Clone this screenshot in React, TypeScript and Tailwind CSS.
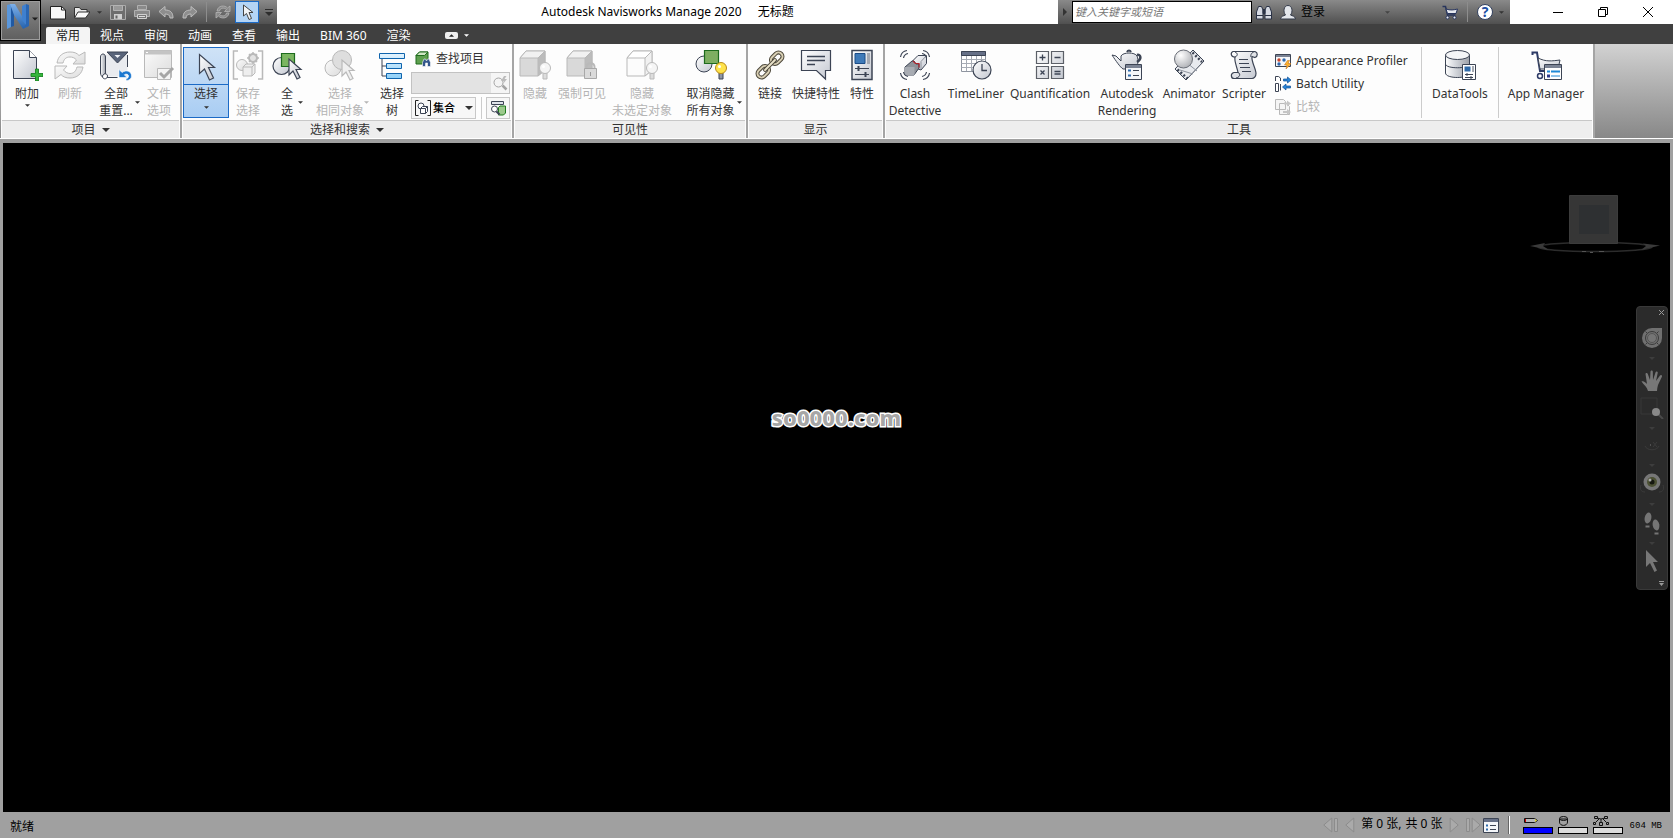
import React from "react";
import clsx from "clsx";

// ============================================================================
// Small shared pieces
// ============================================================================

const INK = "#3c4454";
const PALE = "#b9b9b9";

function Caret({ className = "" }: { className?: string }) {
  return (
    <svg viewBox="0 0 8 4" className={clsx("shrink-0", className)}>
      <path d="M0 0h8L4 4z" fill="currentColor" />
    </svg>
  );
}

function Big({ children }: { children: React.ReactNode }) {
  return (
    <svg viewBox="0 0 32 32" className="h-8 w-8 shrink-0" fill="none">
      {children}
    </svg>
  );
}

function Small({ children }: { children: React.ReactNode }) {
  return (
    <svg viewBox="0 0 16 16" className="h-4 w-4 shrink-0" fill="none">
      {children}
    </svg>
  );
}

// Gradients used by the icons below
function IconDefs() {
  return (
    <svg width="0" height="0" className="absolute" aria-hidden="true">
      <defs>
        <linearGradient id="metal" x1="0" y1="0" x2="1" y2="1">
          <stop offset="0" stopColor="#ffffff" />
          <stop offset="1" stopColor="#c3c7d0" />
        </linearGradient>
        <linearGradient id="faded" x1="0" y1="0" x2="1" y2="1">
          <stop offset="0" stopColor="#fbfbfb" />
          <stop offset="1" stopColor="#dcdcdc" />
        </linearGradient>
        <linearGradient id="bar" x1="0" y1="0" x2="0" y2="1">
          <stop offset="0" stopColor="#e4f4ff" />
          <stop offset="1" stopColor="#8fd0f8" />
        </linearGradient>
        <linearGradient id="drum" x1="0" y1="0" x2="1" y2="0">
          <stop offset="0" stopColor="#ffffff" />
          <stop offset="0.4" stopColor="#d5d8dd" />
          <stop offset="1" stopColor="#9ca0a8" />
        </linearGradient>
        <linearGradient id="logo" x1="0" y1="0" x2="0" y2="1">
          <stop offset="0" stopColor="#7db0ea" />
          <stop offset="1" stopColor="#2462ad" />
        </linearGradient>
        <radialGradient id="ball" cx="0.35" cy="0.3" r="0.8">
          <stop offset="0" stopColor="#ffffff" />
          <stop offset="1" stopColor="#a9abb0" />
        </radialGradient>
      </defs>
    </svg>
  );
}

// ============================================================================
// Ribbon icons, 32px
// ============================================================================

const Pointer = ({ x, y, faded }: { x: number; y: number; faded?: boolean }) => (
  <path
    transform={`translate(${x} ${y})`}
    d="M0 0v16l4-4 4 8 3-1.500-4-8h5z"
    fill={faded ? "#f0f0f0" : "url(#metal)"}
    stroke={faded ? PALE : INK}
    strokeWidth="1.200"
  />
);

const Cube = ({ light }: { light?: boolean }) => (
  <g stroke={PALE} strokeLinejoin="round">
    <path d="M1 9v18h18l7-6V2H7z" fill={light ? "#fcfcfc" : "#d9d9d9"} />
    <path d="M1 9l6-7h19l-7 7z" fill={light ? "#fff" : "#f1f1f1"} />
    <path d="M19 9l7-7v19l-7 6z" fill={light ? "#f1f1f1" : "#bcbcbc"} />
  </g>
);

const Bulb = ({ lit }: { lit?: boolean }) => (
  <g stroke={lit ? INK : PALE}>
    <path d="M24 24h4v6h-4z" fill={lit ? "#8f96a3" : "#ddd"} />
    <circle cx="26" cy="19" r="5.500" fill={lit ? "#ffe34a" : "#f5f5f5"} stroke={lit ? "#b9891a" : PALE} />
    <circle cx="24.500" cy="17.500" r="1.500" fill="#fff" stroke="none" />
  </g>
);

const AppendIcon = () => (
  <Big>
    <path d="M2.500 1.500h16l7 7v21h-23z" fill="url(#metal)" stroke={INK} />
    <path d="M18.500 1.500v7h7" fill="#fff" stroke={INK} />
    <path d="M24.500 20h3v4.500H32v3h-4.500V32h-3v-4.500H20v-3h4.500z" fill="#35b53c" stroke="#0c7a17" strokeWidth=".8" />
  </Big>
);

const RefreshIcon = () => (
  <Big>
    <g fill="url(#faded)" stroke={PALE}>
      <path d="M3 14C4 7 9 3 16 3c4 0 7 1 9 3.500L31 3v12H19l3.500-4C20.500 8.500 18 8 16 8c-4 0-6 2-7 6z" />
      <path d="M29 18c-1 7-6 11-13 11-4 0-7-1-9-3.500L1 30V17h12l-3.500 4c2 2.500 4.500 3.500 6.500 3.500 4 0 6-2.500 7-6.500z" />
    </g>
  </Big>
);

const ResetIcon = () => (
  <Big>
    <path d="M5.500 5.500h22v22h-22z" fill="#e9ebef" />
    <path d="M27.500 6v12M5.500 28.500h12" stroke={INK} />
    <path d="M0.500 8c0-4 5-4 5 0v17c-2 0-3 1-3 3-1-1-2-2-2-4z" fill="url(#drum)" stroke={INK} />
    <path d="M2.500 28c0-4 5-4 5-1s-4 4-5 1z" fill="#fff" stroke={INK} />
    <path d="M7 3h21L17.500 14z" fill="#59647a" stroke={INK} />
    <path d="M14.500 6h6l-3 3z" fill="#eef1f6" />
    <path
      d="M19 20.500v8h8l-2.700-2.700c2-1.500 4.200-.3 4.200 1.200 0 1.500-1 2.500-2.500 3v1.500c3.500 0 5.500-2 5.500-4.500 0-5-5.500-6.500-9.500-3.500z"
      fill="#1c78d0"
      stroke="#fff"
      strokeWidth=".6"
    />
  </Big>
);

const FileOptionsIcon = () => (
  <Big>
    <path d="M1.500 1.500h27v27h-27z" fill="url(#faded)" stroke={PALE} />
    <path d="M1.500 1.500h27v4h-27z" fill="#c4c4c4" />
    <path d="M3 3.500h2" stroke="#fff" />
    <path d="M14.500 19.500h13v11h-13z" fill="#f4f4f4" stroke={PALE} />
    <path d="M17 24l4 4 9-9" stroke="#a6a6a6" strokeWidth="3" />
  </Big>
);

const SelectIcon = () => (
  <Big>
    <path d="M9.500 4.500v19l5-4.500 5 11 4-2-5-10.500h6z" fill="url(#metal)" stroke={INK} strokeWidth="1.200" />
  </Big>
);

const SaveSelectionIcon = () => (
  <Big>
    <g stroke={PALE}>
      <path d="M6 2H1.500v28H6M26 2h4.500v28H26" strokeWidth="1.500" />
      <circle cx="10" cy="16" r="5.500" fill="url(#faded)" />
      <path d="M11 18l3-3h9v9l-3 3h-9z" fill="#eee" />
      <path d="M11 18h9l3-3m-3 3v9" />
      <circle cx="21" cy="9" r="4" fill="#e3e3e3" strokeWidth="2" />
      <path d="M21 3v3m0 6v3m-6-6h3m6 0h3M17 5l2 2m4 4l2 2m0-8l-2 2m-4 4l-2 2" strokeWidth="1.500" />
    </g>
  </Big>
);

const SelectAllIcon = () => (
  <Big>
    <circle cx="10.500" cy="17" r="8.500" fill="url(#metal)" stroke={INK} strokeWidth="1.200" />
    <path d="M10.500 4.500h13v13h-13z" fill="#7bb661" stroke="#1d6b1d" strokeWidth="1.200" />
    <Pointer x={18} y={10} />
  </Big>
);

const SelectSameIcon = () => (
  <Big>
    <circle cx="9" cy="19" r="8" fill="url(#faded)" stroke={PALE} />
    <circle cx="18" cy="11" r="9.500" fill="#dedede" stroke={PALE} />
    <Pointer x={18} y={11} faded />
  </Big>
);

const TreeIcon = () => (
  <Big>
    <path d="M6 9v18h4M6 17h4" stroke={INK} />
    <g fill="url(#bar)" stroke="#0f64ad">
      <path d="M3.500 4.500h25v5h-25zM10.500 14.500h15v5h-15zM10.500 24.500h15v5h-15z" />
    </g>
  </Big>
);

const HideIcon = () => (
  <Big>
    <Cube />
    <Bulb />
  </Big>
);

const RequireIcon = () => (
  <Big>
    <Cube />
    <path d="M20.500 20v-2c0-5 8-5 8 0v2" stroke={PALE} strokeWidth="2" />
    <path d="M18.500 19.500h12v10h-12z" fill="#dadada" stroke="#a8a8a8" />
    <path d="M24.500 23v4" stroke="#999" />
  </Big>
);

const HideOthersIcon = () => (
  <Big>
    <Cube light />
    <Bulb />
  </Big>
);

const UnhideIcon = () => (
  <Big>
    <circle cx="9" cy="15" r="8" fill="url(#metal)" stroke={INK} />
    <path d="M9.500 1.500h14v13h-14z" fill="#7eae62" stroke="#1d6b1d" strokeWidth="1.200" />
    <Bulb lit />
  </Big>
);

const LinkIcon = () => (
  <Big>
    <g transform="rotate(-45 16 16)" strokeLinejoin="round">
      <rect x="0" y="12" width="13" height="8" rx="4" stroke="#4b4639" strokeWidth="4" />
      <rect x="0" y="12" width="13" height="8" rx="4" stroke="#d8cfb4" strokeWidth="2" />
      <rect x="19" y="12" width="13" height="8" rx="4" stroke="#4b4639" strokeWidth="4" />
      <rect x="19" y="12" width="13" height="8" rx="4" stroke="#d8cfb4" strokeWidth="2" />
      <path d="M9 16h14" stroke="#4b4639" strokeWidth="4" strokeLinecap="round" />
      <path d="M9 16h14" stroke="#e8e0c8" strokeWidth="2" strokeLinecap="round" />
    </g>
  </Big>
);

const QuickPropsIcon = () => (
  <Big>
    <path d="M1.500 1.500h29v20h-5V30l-9-8.500h-15z" fill="url(#metal)" stroke={INK} strokeWidth="1.200" />
    <path d="M7 7.500h18M7 11.500h18M7 15.500h8" stroke={INK} strokeWidth="1.500" />
  </Big>
);

const PropsIcon = () => (
  <Big>
    <path d="M6 1.500h20v29H6z" fill="url(#metal)" stroke={INK} strokeWidth="1.500" />
    <path d="M9 4.500h10v10H9z" fill="#3f7ab8" stroke="#1b4c87" />
    <path d="M21 4h3v11h-3z" fill="#a4a9b2" />
    <path d="M9 19.500h14M9 25.500h14" stroke={INK} />
    <path d="M12.500 17v5M19.500 23v5" stroke={INK} strokeWidth="2" />
  </Big>
);

const ClashIcon = () => (
  <Big>
    <path d="M13.500 12l5.500-5.500h8.500v8L22 21l-8.500-3z" fill="url(#metal)" stroke={INK} />
    <path d="M22 12.500l5.500-6M22 12.500V20" stroke="#8d929c" />
    <path d="M6 18l7-6h2l2 3h3v4l-5 7H6z" fill="#8e9299" stroke={INK} />
    <path d="M6 18h9.500V26H6z" fill="#a8acb3" />
    <path d="M14 12l2.500 2.500h3.500v4" stroke="#b0232c" strokeWidth="1.200" />
    <path
      d="M1.500 8C2 4.500 4.500 2 8 1.500M4.500 9C5 6.500 6.500 5 9 4.500M30.500 8C30 4.500 27.500 2 24 1.500M27.500 9C27 6.500 26 5 23 4.500M1.500 24c.5 3.500 3 6 6.500 6.500M4.500 23c.5 2.500 2 4 4.500 4.500M30.500 24c-.5 3.500-3 6-6.500 6.500M27.500 23c-.5 2.500-2 4-4.500 4.500"
      stroke={INK}
      strokeWidth="1.200"
    />
  </Big>
);

const TimeLinerIcon = () => (
  <Big>
    <path d="M1.500 2.500h24v20h-24z" fill="#fff" stroke="#8f95a0" />
    <path d="M1.500 2.500h24v4h-24z" fill="#667087" stroke={INK} />
    <path d="M1.500 10.500h24m-24 4h24m-24 4h24M6.500 7v15M11.500 7v15M16.500 7v15M21.500 7v15" stroke="#a7acb5" />
    <circle cx="22" cy="21" r="9" fill="url(#metal)" stroke={INK} strokeWidth="1.200" />
    <path d="M22 15v6.500h5" stroke={INK} strokeWidth="1.300" />
  </Big>
);

const QuantIcon = () => (
  <Big>
    <g fill="url(#metal)" stroke="#5c6068" strokeWidth="1.200">
      <path d="M2.500 2.500h12v12h-12zM17.500 2.500h12v12h-12zM2.500 17.500h12v12h-12zM17.500 17.500h12v12h-12z" />
    </g>
    <path
      d="M5.500 8.500h6m-3-3v6M20.500 8.500h6M6.500 21.500l4 4m0-4l-4 4M20.500 22.500h6m-6 2.500h6"
      stroke={INK}
      strokeWidth="1.300"
    />
  </Big>
);

const RenderingIcon = () => (
  <Big>
    <path d="M10 7c2-4 14-4 16 0 2 5 1 10-3 13H12C9 18 5 12 1 6l4 1 5 5z" fill="url(#metal)" stroke={INK} />
    <path d="M16 3c1-2 3-2 4 0" stroke={INK} strokeWidth="2" />
    <path d="M26 6c4-1 5 4 0 7" stroke={INK} strokeWidth="2.500" />
    <path d="M14.500 15.500h16v15h-16z" fill="#f4f6f9" stroke={INK} />
    <path d="M15 16h15v3H15z" fill="#7b8394" />
    <path d="M17 21.500h3m-3 5h3" stroke="#2e6aac" strokeWidth="2" />
    <path d="M22 21.500h6m-6 5h6" stroke={INK} />
  </Big>
);

const AnimatorIcon = () => (
  <Big>
    <path d="M2 20L20 1l11 11-18 19z" fill="#e8eaee" stroke={INK} />
    <path d="M4.500 20.500l10 9M19.500 3.500l9.500 9.500" stroke={INK} strokeWidth="2.500" strokeDasharray="2 2" />
    <path d="M7 21l13 4M14 14l10 8" stroke="#8f95a0" />
    <circle cx="10.500" cy="10" r="9" fill="url(#ball)" stroke="#6a6e77" />
  </Big>
);

const ScripterIcon = () => (
  <Big>
    <path d="M5 2.500h22c3 1 3 5 0 6l-3-1c-1 5 4 12 4 17 0 3-2 5-4 5H6c-3 0-4-5 0-6h4C9 18 6 12 7 8 3 8 2 4 5 2.500z" fill="url(#metal)" stroke={INK} strokeWidth="1.200" />
    <path d="M7 8c3-1 3-4 0-5M23 8c-1-2 1-5 4-5.500M10 23.500c3 1 2 5-2 5.500" stroke={INK} />
    <path d="M11 10.500h9M11 14.500h10M12 18.500h10M14 22.500h9" stroke={INK} />
  </Big>
);

const DataToolsIcon = () => (
  <Big>
    <path d="M1.500 6v18c0 6 24 6 24 0V6z" fill="url(#drum)" stroke={INK} />
    <ellipse cx="13.500" cy="6" rx="12" ry="4.500" fill="#f4f5f7" stroke={INK} />
    <path d="M1.500 15c0 5 24 5 24 0" stroke={INK} />
    <path d="M18.500 15.500h13v15h-13z" fill="#fff" stroke={INK} />
    <path d="M20.500 17.500h6v5h-6z" fill="#2f6aa9" />
    <path d="M28 17v6h2v-6z" fill="#a4a9b2" />
    <path d="M21 25.500h8m-8 3h8" stroke={INK} />
    <path d="M23 24v3m4 0v3" stroke={INK} />
  </Big>
);

const AppManagerIcon = () => (
  <Big>
    <path d="M2.500 6V3.500H7L10 22h5" stroke="#2d3a66" strokeWidth="2" />
    <path d="M8 9c8 4 14 3 22 2l-2 9H10z" fill="url(#metal)" stroke={INK} />
    <circle cx="10" cy="27" r="2.500" fill="#fff" stroke="#2d3a66" strokeWidth="1.500" />
    <path d="M14.500 15.500h17v15h-17z" fill="#fff" stroke={INK} />
    <path d="M15 16h16v3H15z" fill="#7b8394" />
    <path d="M17 22.500h3m1 0h9" stroke="#1f8ad8" strokeWidth="2" />
    <path d="M17 27h3" stroke="#2d3a8c" strokeWidth="3" />
    <path d="M21 27h9" stroke="#1f8ad8" />
  </Big>
);

// ============================================================================
// 16px icons
// ============================================================================

const NewIcon = () => (
  <Small>
    <path d="M.5 2.500h11l4 3.500v9H.5z" fill="#f7f7f7" stroke="#222" />
    <path d="M11.500 2.500V6h4" stroke="#222" />
  </Small>
);

const OpenIcon = () => (
  <Small>
    <path d="M.5 14V3.500h5l1.500 2h6V8" fill="#e9e9e9" stroke="#333" />
    <path d="M.5 14L4 8h12l-4.500 6z" fill="#fafafa" stroke="#333" />
  </Small>
);

const SaveIcon = () => (
  <Small>
    <path d="M.5 1.500h15v14H.5z" fill="#6e6e6e" stroke="#aaa" />
    <path d="M3.500 1.500h9v5h-9z" fill="#999" stroke="#b4b4b4" />
    <path d="M4 10h8v5H4z" fill="#cfcfcf" />
    <path d="M5.500 11.500h2v3h-2z" fill="#666" />
  </Small>
);

const PrintIcon = () => (
  <Small>
    <path d="M3.500 1.500h9v4h-9zM.5 6.500h15v6H.5z" fill="#8a8a8a" stroke="#b0b0b0" />
    <path d="M3.500 10.500h9v4h-9z" fill="#777" stroke="#d0d0d0" />
    <path d="M5 12.500h6" stroke="#ddd" />
  </Small>
);

const UndoIcon = ({ flip }: { flip?: boolean }) => (
  <Small>
    <path
      transform={flip ? "translate(16 0) scale(-1 1)" : undefined}
      d="M1 7.500l6-5V6c5 0 8 2 8 8h-3c0-3-2-4-5-4v3z"
      fill="#8e8e8e"
      stroke="#bdbdbd"
    />
  </Small>
);

const SyncIcon = () => (
  <Small>
    <path d="M2 7c1-6 8-6 10.500-3L15 2v5.500H9.500l2-2C9.500 3.500 5 3.500 4.500 7zM14 9c-1 6-8 6-10.500 3L1 14V8.500h5.500l-2 2c2 2 6.500 2 7-1.500z" fill="#8a8a8a" stroke="#b5b5b5" strokeWidth=".8" />
  </Small>
);

const CursorIcon = () => (
  <Small>
    <path d="M4.500 1v11l3-2.500 2.500 6 2.500-1-2.500-6h4z" fill="#f1f3f6" stroke="#444" />
  </Small>
);

const BinocularsIcon = () => (
  <Small>
    <g fill="#d5d9e2" stroke="#2a3246">
      <path d="M.5 15V8l2-5.500h3L7 6v9zM15.500 15V8l-2-5.500h-3L9 6v9z" />
      <path d="M7 5.500h2v4H7z" fill="#2a3246" />
    </g>
    <path d="M.5 11.500H7M9 11.500h6.500" stroke="#2a3246" />
  </Small>
);

const UserIcon = () => (
  <Small>
    <path d="M.5 15c.5-3 3-3 5-4C3 8 3.500 1.500 8 1.500S13 8 10.500 11c2 1 4.500 1 5 4z" fill="#e3e6eb" stroke="#333a49" />
  </Small>
);

const CartIcon = () => (
  <Small>
    <path d="M.5 2.500h3l2 8.500h8" stroke="#27345c" strokeWidth="1.500" />
    <path d="M4 5c4 1.500 8 1 11.500 0L14 9.500H5.500z" fill="#e6e9f0" stroke="#27345c" />
    <circle cx="5.500" cy="13.500" r="1.500" fill="#e6e9f0" stroke="#27345c" />
    <circle cx="12.500" cy="13.500" r="1.500" fill="#e6e9f0" stroke="#27345c" />
  </Small>
);

const FindItemsIcon = () => (
  <Small>
    <path d="M1 4.500L4.500 1H13v8l-3.500 4H1z" fill="#5d9f4e" stroke="#1e6b1c" />
    <path d="M1 4.500L4.500 1H13L9.500 4.500z" fill="#cfe6c4" stroke="#1e6b1c" />
    <path d="M7.500 15.500v-4L9 8h1.500l1 2 1-2H14l1.500 3.500v4h-3V12h-2v3.500z" fill="#33568c" stroke="#fff" strokeWidth=".6" />
  </Small>
);

const QuickFindIcon = () => (
  <Small>
    <path d="M10.500 10.500l4 4" stroke="#a5a5a5" strokeWidth="2.500" />
    <circle cx="6.500" cy="7.500" r="4.500" fill="#f4f4f4" stroke="#a5a5a5" />
    <path d="M12 1l-3 5h3l-1 3 4-5h-2.500l2-3z" fill="#bbb" />
  </Small>
);

const SetsIcon = () => (
  <Small>
    <path d="M3.500.5H.5v15h3M12.500.5h3v15h-3" stroke="#222" />
    <circle cx="6" cy="6" r="3" fill="#fff" stroke="#3a4252" />
    <path d="M5.500 8.500l2-2h5v5l-2 2h-5z" fill="#fff" stroke="#3a4252" />
    <path d="M5.500 8.500h5v5m0-5l2-2" stroke="#3a4252" />
  </Small>
);

const FindWindowIcon = () => (
  <Small>
    <path d="M1.500 1.500h12v3h-12z" fill="#dfe3ea" stroke={INK} />
    <path d="M8.500 7.500L10 6h5.500v7l-2 2h-5z" fill="#9cc98c" stroke="#1e7a1c" />
    <circle cx="4.500" cy="9" r="3" fill="#fff" stroke={INK} />
    <path d="M6.500 11.500l3 3" stroke={INK} strokeWidth="2" />
  </Small>
);

const AppearanceIcon = () => (
  <Small>
    <path d="M.5 1.500h15v12H.5z" fill="#f6f7f9" stroke={INK} />
    <path d="M1 2h14v2H1z" fill="#7b8394" />
    <circle cx="4" cy="7" r="1.700" fill="#c8442c" />
    <circle cx="9" cy="7" r="1.700" fill="#2e68ae" />
    <circle cx="4" cy="11" r="1.700" fill="#2e68ae" />
    <path d="M12.500 7.500L9.500 12H12l-1 4 5-5.500h-3l1.500-3z" fill="#ffb42e" stroke="#c9761a" strokeWidth=".6" />
  </Small>
);

const BatchIcon = () => (
  <Small>
    <path d="M.5 5V.5h3L5.500 2v3M.5 15.500v-8h3v8zM5.500 8v6.500" fill="#fff" stroke={INK} />
    <path d="M16 4l-3.500-3v2H8.500v2h4v2zM7.500 11L11 8v2h4.500v2H11v2z" fill="#2784d8" stroke="#0f4f96" strokeWidth=".7" />
  </Small>
);

const CompareIcon = () => (
  <Small>
    <path d="M.5.5h8l2 2v8H.5zM4.500 4.500h7l3 3v8h-10z" fill="#f5f5f5" stroke={PALE} />
    <path d="M16 4.500l-4-3v2H9v2h3v2zM8 12h4v-2l4 3-4 3v-2H8z" fill="#c5c5c5" />
  </Small>
);

// ============================================================================
// Ribbon
// ============================================================================

interface ToolProps {
  icon: React.ElementType;
  lines: string[];
  width: string;
  disabled?: boolean;
  menu?: boolean;
}

function Tool({ icon: Icon, lines, width, disabled, menu }: ToolProps) {
  return (
    <button
      type="button"
      disabled={disabled}
      className={clsx(
        "relative flex shrink-0 flex-col items-center pt-1 leading-[17px] whitespace-nowrap",
        disabled ? "text-[#b4b4b4]" : "text-[#333]",
        width,
      )}
    >
      <Icon />
      <span className="mt-0.5 flex flex-col items-center pt-0.5">
        {lines.map((line) => (
          <span key={line}>{line}</span>
        ))}
      </span>
      {menu && lines.length === 1 && <Caret className="mt-0.5 h-[3px] w-[5px]" />}
      {menu && lines.length > 1 && (
        <Caret className="absolute right-1 bottom-4 h-[3px] w-[5px]" />
      )}
    </button>
  );
}

interface PanelProps {
  title: string;
  menu?: boolean;
  children: React.ReactNode;
}

function Panel({ title, menu, children }: PanelProps) {
  return (
    <section className="flex shrink-0 flex-col border-r-2 border-[#a5a5a5] bg-[#fdfdfd] pl-px">
      <div className="flex h-[76px] items-stretch pt-px">{children}</div>
      <h2 className="mr-px flex h-[18px] items-center justify-center gap-1.5 border-t border-[#c8c8c8] bg-[#eee] text-[#333]">
        {title}
        {menu && <Caret className="h-1 w-2" />}
      </h2>
    </section>
  );
}

function SelectionTools() {
  return (
    <div className="flex w-[101px] flex-col gap-[3px] pt-1 pr-0.5">
      <button type="button" className="flex h-5 items-center gap-[5px] pl-1 text-[#333]">
        <FindItemsIcon />
        查找项目
      </button>
      <div className="flex h-[22px] items-center border border-[#c2c2c2] bg-[#e3e3e3]">
        <input aria-label="快速查找" disabled className="h-full w-0 flex-1 bg-transparent px-1 outline-none" />
        <button type="button" aria-label="查找" className="flex h-full w-[18px] items-center justify-center bg-[#f5f5f5]">
          <QuickFindIcon />
        </button>
      </div>
      <div className="flex h-[22px] items-stretch justify-between">
        <div className="relative flex w-[65px] items-center border border-[#c8c8c8] bg-[#f7f7f7] pl-[3px]">
          <SetsIcon />
          <select aria-label="集合" className="h-full w-0 flex-1 appearance-none bg-transparent pl-0.5 text-[11px] font-medium text-black outline-none">
            <option>集合</option>
          </select>
          <Caret className="pointer-events-none absolute right-0.5 h-1 w-2 text-[#333]" />
        </div>
        <span className="border-l border-[#ccc]" />
        <button type="button" aria-label="选择检验器" className="flex w-6 items-center justify-center border border-[#c8c8c8] bg-[#f7f7f7]">
          <FindWindowIcon />
        </button>
      </div>
    </div>
  );
}

function Ribbon() {
  return (
    <div className="flex overflow-hidden border-b border-white bg-linear-to-b from-[#d2d2d2] to-[#888] pl-px">
      <Panel title="项目" menu>
        <Tool icon={AppendIcon} lines={["附加"]} width="w-[50px]" menu />
        <Tool icon={RefreshIcon} lines={["刷新"]} width="w-9" disabled />
        <Tool icon={ResetIcon} lines={["全部", "重置..."]} width="w-14" menu />
        <Tool icon={FileOptionsIcon} lines={["文件", "选项"]} width="mr-1.5 w-[30px]" disabled />
      </Panel>

      <Panel title="选择和搜索" menu>
        <button
          type="button"
          className="my-0.5 flex w-[46px] shrink-0 flex-col items-center border border-[#1b6ac6] bg-linear-to-b from-[#cfe2f6] to-[#a9cdf3] pt-0.5 leading-[17px] text-[#333]"
        >
          <SelectIcon />
          <span className="mt-0.5 w-full border-t border-[#1b6ac6]">选择</span>
          <Caret className="mt-1 h-[3px] w-[5px]" />
        </button>
        <Tool icon={SaveSelectionIcon} lines={["保存", "选择"]} width="w-[38px]" disabled />
        <Tool icon={SelectAllIcon} lines={["全", "选"]} width="w-10" menu />
        <Tool icon={SelectSameIcon} lines={["选择", "相同对象"]} width="w-[66px]" disabled menu />
        <Tool icon={TreeIcon} lines={["选择", "树"]} width="w-[38px]" />
        <SelectionTools />
      </Panel>

      <Panel title="可见性">
        <Tool icon={HideIcon} lines={["隐藏"]} width="w-10" disabled />
        <Tool icon={RequireIcon} lines={["强制可见"]} width="w-[54px]" disabled />
        <Tool icon={HideOthersIcon} lines={["隐藏", "未选定对象"]} width="w-[66px]" disabled />
        <Tool icon={UnhideIcon} lines={["取消隐藏", "所有对象"]} width="w-[71px]" menu />
      </Panel>

      <Panel title="显示">
        <Tool icon={LinkIcon} lines={["链接"]} width="w-[42px]" />
        <Tool icon={QuickPropsIcon} lines={["快捷特性"]} width="w-[50px]" />
        <Tool icon={PropsIcon} lines={["特性"]} width="w-[42px]" />
      </Panel>

      <Panel title="工具">
        <Tool icon={ClashIcon} lines={["Clash", "Detective"]} width="w-[58px]" />
        <Tool icon={TimeLinerIcon} lines={["TimeLiner"]} width="w-16" />
        <Tool icon={QuantIcon} lines={["Quantification"]} width="w-[84px]" />
        <Tool icon={RenderingIcon} lines={["Autodesk", "Rendering"]} width="w-[70px]" />
        <Tool icon={AnimatorIcon} lines={["Animator"]} width="w-[54px]" />
        <Tool icon={ScripterIcon} lines={["Scripter"]} width="w-14" />
        <div className="my-0.5 flex w-[150px] flex-col border-r border-[#ccc] pt-0.5 pl-[3px] text-[#333]">
          <button type="button" className="flex h-6 items-center gap-[5px] whitespace-nowrap">
            <AppearanceIcon />
            Appearance Profiler
          </button>
          <button type="button" className="flex h-6 items-center gap-[5px] whitespace-nowrap">
            <BatchIcon />
            Batch Utility
          </button>
          <button type="button" disabled className="flex h-6 items-center gap-[5px] text-[#b4b4b4]">
            <CompareIcon />
            比较
          </button>
        </div>
        <Tool icon={DataToolsIcon} lines={["DataTools"]} width="w-[76px]" />
        <span className="my-0.5 border-l border-[#ccc]" />
        <Tool icon={AppManagerIcon} lines={["App Manager"]} width="w-[94px]" />
      </Panel>
    </div>
  );
}

// ============================================================================
// Title bar and tabs
// ============================================================================

const TABS = ["常用", "视点", "审阅", "动画", "查看", "输出", "BIM 360", "渲染"];

const QUICK_ACTIONS = [
  { id: "save", label: "保存", icon: SaveIcon },
  { id: "print", label: "打印", icon: PrintIcon },
  { id: "undo", label: "撤消", icon: UndoIcon },
];

function QuickAccess() {
  return (
    <div className="flex w-[236px] items-center gap-2 bg-linear-to-b from-[#8a8a8a] to-[#505050] pl-[9px]">
      <button type="button" aria-label="新建"><NewIcon /></button>
      <button type="button" aria-label="打开" className="flex items-center gap-[7px] text-[#333]">
        <OpenIcon />
        <Caret className="h-[3px] w-[5px]" />
      </button>
      {QUICK_ACTIONS.map(({ id, label, icon: Icon }) => (
        <button key={id} type="button" aria-label={label}><Icon /></button>
      ))}
      <button type="button" aria-label="恢复"><UndoIcon flip /></button>
      <span className="h-5 border-l border-[#8d8d8d]" />
      <button type="button" aria-label="刷新"><SyncIcon /></button>
      <div className="-ml-1 flex items-center gap-1.5">
        <button type="button" aria-label="选择" className="flex h-[22px] w-6 items-center justify-center border border-[#1b6ac6] bg-[#b4d4f5]">
          <CursorIcon />
        </button>
        <button type="button" aria-label="自定义" className="text-[#2d2d2d]">
          <svg viewBox="0 0 8 7" className="h-[7px] w-2">
            <path d="M0 0h8v1H0zM0 3h8L4 7z" fill="currentColor" />
          </svg>
        </button>
      </div>
    </div>
  );
}

function InfoCenter() {
  return (
    <div className="flex w-[452px] items-center bg-linear-to-b from-[#8a8a8a] to-[#505050] pr-1.5 text-black">
      <button type="button" aria-label="展开" className="flex w-3.5 justify-center text-[#333]">
        <svg viewBox="0 0 4 8" className="h-2 w-1">
          <path d="M0 0l4 4-4 4z" fill="currentColor" />
        </svg>
      </button>
      <input
        aria-label="搜索"
        placeholder="键入关键字或短语"
        className="h-[22px] w-[180px] border border-black bg-white px-0.5 pb-0.5 text-[11px] outline-none placeholder:text-[#777] placeholder:italic"
      />
      <button type="button" aria-label="搜索" className="ml-1"><BinocularsIcon /></button>
      <button type="button" className="ml-2 flex flex-1 items-center gap-[5px]">
        <UserIcon />
        登录
        <Caret className="ml-[55px] h-[3px] w-[5px] text-[#444]" />
      </button>
      <button type="button" aria-label="应用商店"><CartIcon /></button>
      <span className="mx-[9px] h-5 border-l border-[#8d8d8d]" />
      <button type="button" aria-label="帮助" className="flex items-center gap-1.5 text-[#333]">
        <span className="flex h-4 w-4 items-center justify-center rounded-full border border-[#33415f] bg-white text-sm font-bold text-[#1d4fa3]">
          ?
        </span>
        <Caret className="h-[3px] w-[5px]" />
      </button>
    </div>
  );
}

function WindowControls() {
  return (
    <div className="flex w-[163px] justify-end bg-white pr-[3px] text-black">
      <button type="button" aria-label="最小化" className="flex w-[45px] items-center justify-center">
        <svg viewBox="0 0 10 10" className="h-2.5 w-2.5"><path d="M0 5.500h10" stroke="currentColor" /></svg>
      </button>
      <button type="button" aria-label="还原" className="flex w-[45px] items-center justify-center">
        <svg viewBox="0 0 10 10" className="h-2.5 w-2.5" fill="none">
          <path d="M.5 2.500h7v7h-7zM2.500 2.500v-2h7v7h-2" stroke="currentColor" />
        </svg>
      </button>
      <button type="button" aria-label="关闭" className="flex w-[45px] items-center justify-center">
        <svg viewBox="0 0 10 10" className="h-2.5 w-2.5"><path d="M0 0l10 10M10 0L0 10" stroke="currentColor" /></svg>
      </button>
    </div>
  );
}

function Header() {
  return (
    <header className="flex h-11 items-start bg-[#404040]">
      <button
        type="button"
        aria-label="应用程序菜单"
        className="flex h-[41px] w-[41px] shrink-0 items-start border border-black bg-linear-to-b from-[#8a8a8a] to-[#5f5f5f] text-[#1c1c1c] shadow-[inset_0_0_0_1px_#9c9c9c]"
      >
        <svg viewBox="0 0 24 27" className="mt-0.5 ml-[5px] h-[27px] w-6 shrink-0">
          <path d="M1 2l4-1v23l-4 2z" fill="#5a97dc" />
          <path d="M5 1l3 4v18l-3 1z" fill="#2159a2" />
          <path d="M4 1h5l12 21-4 4L8 12z" fill="url(#logo)" />
          <path d="M16 3l4-2v21l-4-5z" fill="#3f80cf" />
          <path d="M20 1l3 1v21l-6 3 3-5z" fill="#2a66b3" />
        </svg>
        <Caret className="mt-4 ml-0.5 h-1 w-1.5" />
      </button>
      <div className="flex flex-1 flex-col">
        <div className="flex h-6">
          <QuickAccess />
          <h1 className="flex flex-1 items-center justify-center gap-4 bg-white text-black">
            <span>Autodesk Navisworks Manage 2020</span>
            <span>无标题</span>
          </h1>
          <InfoCenter />
          <WindowControls />
        </div>
        <nav className="flex h-5 items-end pl-[5px] text-white">
          {TABS.map((tab, i) => (
            <button
              key={tab}
              type="button"
              className={clsx(
                "h-[17px] px-2.5 leading-4",
                i === 0 && "rounded-t-xs bg-[#f4f4f4] text-[#222]",
              )}
            >
              {tab}
            </button>
          ))}
          <button type="button" aria-label="最小化功能区" className="ml-6 flex h-[18px] items-center gap-1.5">
            <span className="flex h-[7px] w-[13px] items-center justify-center rounded-xs bg-[#eee] text-[#222]">
              <Caret className="h-[3px] w-[5px] rotate-180" />
            </span>
            <Caret className="h-[3px] w-[5px]" />
          </button>
        </nav>
      </div>
    </header>
  );
}

// ============================================================================
// Scene view
// ============================================================================

function ViewCube() {
  return (
    <svg viewBox="0 0 130 62" className="absolute top-[51px] right-2.5 h-[62px] w-[130px]" fill="none">
      <ellipse cx="65" cy="53" rx="57" ry="4.500" stroke="#2c2c2c" strokeWidth="1.500" />
      <path d="M0 52l15-3-2 3 6 4zM130 51.500l-17-2 3 2.500-5 4z" fill="#3a3a3a" />
      <path d="M52 57.500h4m4 1h3m6-1h5" stroke="#555" />
      <path d="M39.500 1.500h48v48h-48z" fill="#363636" stroke="#3c3c3c" />
      <path d="M49 11h30v29H49z" fill="#2e3032" />
    </svg>
  );
}

const NavCaret = () => <Caret className="h-[3px] w-1.5 text-[#3d3d3d]" />;

function NavigationBar() {
  return (
    <div className="absolute top-[163px] right-0.5 flex h-[284px] w-8 flex-col items-center rounded-sm border border-[#393939] bg-[#2b2b2b] text-[#777]">
      <button type="button" aria-label="关闭" className="flex h-2.5 w-full items-center justify-end pr-[3px]">
        <svg viewBox="0 0 5 5" className="h-[5px] w-[5px]"><path d="M0 0l5 5M5 0L0 5" stroke="#999" /></svg>
      </button>
      <button type="button" aria-label="SteeringWheels" className="mt-2.5 flex flex-col items-center gap-2">
        <svg viewBox="0 0 22 22" className="h-[22px] w-[22px]" fill="none">
          <path d="M11 1h10v10A10 10 0 1 1 11 1z" fill="#707070" />
          <circle cx="11" cy="11" r="6.500" stroke="#3a3a3a" />
          <circle cx="11" cy="11" r="4.500" fill="#757575" stroke="#555" />
          <path d="M6 6L4.500 4.500m11.500 11.500l1.500 1.500M6 16l-1.500 1.500M16 6l1.500-1.500" stroke="#3a3a3a" />
        </svg>
        <NavCaret />
      </button>
      <button type="button" aria-label="平移" className="mt-2.5">
        <svg viewBox="0 0 22 22" className="h-[22px] w-[22px]">
          <path d="M7 21c-1-4-4-6-6.500-9.500 2-1 4 1 5.500 2.500L4.500 4c0-1.500 2-1.500 2.300 0L9 10 9.500 1.500c0-1.500 2.300-1.500 2.300 0L12 10l2.500-7.500c.5-1.500 2.500-1 2.200.5L15 11l4-5.500c1-1.200 2.500-.2 2 1L17 15c-.5 2-1 4-1 6z" fill="#777" />
        </svg>
      </button>
      <button type="button" aria-label="缩放窗口" className="mt-[5px] flex flex-col items-center gap-2">
        <svg viewBox="0 0 24 22" className="h-[22px] w-6" fill="none">
          <path d="M1 1h16v16H1z" stroke="#383838" />
          <path d="M18 17l5 5" stroke="#4a4a4a" strokeWidth="2" />
          <circle cx="16" cy="15" r="4" fill="#888" />
        </svg>
        <NavCaret />
      </button>
      <button type="button" aria-label="动态观察" className="mt-2 flex flex-col items-center gap-3">
        <svg viewBox="0 0 20 14" className="h-3.5 w-5" fill="none">
          <path d="M3 8c2 5 12 5 14 0M11 4l4 5m0-5l-4 5" stroke="#3b3b3b" />
          <path d="M8 7h1" stroke="#777" />
        </svg>
        <NavCaret />
      </button>
      <button type="button" aria-label="环视" className="mt-1 flex flex-col items-center gap-2">
        <svg viewBox="0 0 24 24" className="h-6 w-6" fill="none">
          <path d="M1 14c-2 5 1 7 4 7M23 14c2 5-1 7-4 7" stroke="#3b3b3b" />
          <circle cx="12" cy="11" r="8.500" fill="#777" />
          <circle cx="12" cy="11" r="5" fill="#4c5134" />
          <circle cx="12" cy="11" r="2.500" fill="#15170f" />
          <circle cx="10" cy="9" r="1.500" fill="#aaa" />
        </svg>
        <NavCaret />
      </button>
      <button type="button" aria-label="漫游" className="mt-1.5 flex flex-col items-center gap-1.5">
        <svg viewBox="0 0 18 24" className="h-6 w-[18px]" fill="#757575">
          <ellipse cx="5" cy="6" rx="3.300" ry="5.500" transform="rotate(12 5 6)" />
          <ellipse cx="13" cy="13" rx="3.300" ry="5.500" transform="rotate(-12 13 13)" />
          <path d="M2.500 13.500h4v2h-4zM11.500 20.500h4v2h-4z" />
        </svg>
        <NavCaret />
      </button>
      <button type="button" aria-label="选择" className="mt-1">
        <svg viewBox="0 0 14 24" className="h-6 w-3.5">
          <path d="M1 1v17l4-4 4.500 9 2.500-1.500L8 13h5z" fill="#777" />
        </svg>
      </button>
      <button type="button" aria-label="自定义" className="mt-auto flex h-3 w-full items-center justify-end pr-[3px] text-[#999]">
        <svg viewBox="0 0 5 5" className="h-[5px] w-[5px]"><path d="M0 0h5v1H0zM0 2h5L2.500 5z" fill="currentColor" /></svg>
      </button>
    </div>
  );
}

// ============================================================================
// Status bar
// ============================================================================

const METERS = [
  {
    label: "铅笔",
    fill: "bg-[#0000ff]",
    icon: (
      <svg viewBox="0 0 16 10" className="h-2.5 w-4" fill="none">
        <path d="M1.500 2.500h10l3 2-3 2h-10z" fill="#b9b9b9" stroke="#111" />
        <path d="M2 3h1v3H2z" fill="#c00" />
        <path d="M12 3l2 1.500L12 6z" fill="#e8dc30" />
      </svg>
    ),
  },
  {
    label: "磁盘",
    fill: "bg-[#dcdcdc]",
    icon: (
      <svg viewBox="0 0 12 10" className="h-2.5 w-3" fill="none" stroke="#111">
        <path d="M1.500 3v3c0 4.500 8 4.500 8 0V3z" />
        <ellipse cx="5.500" cy="2.500" rx="4" ry="2" />
      </svg>
    ),
  },
  {
    label: "网络",
    fill: "bg-[#dcdcdc]",
    icon: (
      <svg viewBox="0 0 16 10" className="h-2.5 w-4" fill="none" stroke="#111">
        <path d="M1.500.500h3v2h-3zM11.500.500h3v2h-3zM.500 6.500h2v2h-2zM13.500 6.500h2v2h-2zM6.500 6.500h3v3h-3zM4 2l4 1 4-1M8 3v3M6 3L3 6M10 3l3 3" />
      </svg>
    ),
  },
];

function PageArrow({ bar, flip, label }: { bar?: boolean; flip?: boolean; label: string }) {
  return (
    <button type="button" aria-label={label} className={clsx(flip && "-scale-x-100")}>
      <svg viewBox={bar ? "0 0 16 16" : "0 0 10 16"} className={clsx("h-4", bar ? "w-4" : "w-2.5")} fill="#aaa" stroke="#8c8c8c">
        <path d="M.8 8l8-7v14z" />
        {bar && <path d="M11.500 1.500h3v13h-3z" />}
      </svg>
    </button>
  );
}

function StatusBar() {
  return (
    <footer className="flex h-[26px] items-center bg-[#a0a0a0] pr-[11px] pl-2.5 text-black">
      <span className="flex-1 pt-1">就绪</span>
      <div className="flex items-center gap-1.5">
        <PageArrow label="第一张" bar />
        <PageArrow label="上一张" />
        <span className="flex gap-1 pb-0.5">
          <span>第 0 张,</span>
          <span>共 0 张</span>
        </span>
        <PageArrow label="下一张" flip />
        <PageArrow label="最后一张" bar flip />
      </div>
      <button type="button" aria-label="图纸浏览器" className="ml-0.5">
        <svg viewBox="0 0 16 16" className="h-4 w-4" fill="none">
          <path d="M.5 1.500h15v14H.5z" fill="#f4f6f9" stroke={INK} />
          <path d="M1 2h14v3H1z" fill="#667087" />
          <path d="M3 8.500h2m-2 4h2" stroke="#2e6aac" strokeWidth="2" />
          <path d="M7 8.500h6m-6 4h6" stroke={INK} />
        </svg>
      </button>
      <span className="mx-[9px] h-[18px] w-0.5 border-l border-[#666] bg-white" />
      <div className="ml-1 flex gap-[5px]">
        {METERS.map((meter) => (
          <div key={meter.label} title={meter.label} className="flex w-[30px] flex-col gap-px">
            {meter.icon}
            <span className={clsx("h-[7px] border border-black", meter.fill)} />
          </div>
        ))}
      </div>
      <span className="ml-[7px] pt-0.5 font-['Liberation_Mono',monospace] text-[9px]">604 MB</span>
    </footer>
  );
}

// ============================================================================
// Main Component
// ============================================================================

export default function App() {
  return (
    <div className="flex h-screen flex-col overflow-hidden bg-[#a0a0a0] font-['Noto_Sans','Noto_Sans_CJK_SC',sans-serif] text-xs">
      <IconDefs />
      <Header />
      <Ribbon />
      <main className="relative mx-[3px] mt-1 flex flex-1 items-center justify-center bg-black">
        <p className="pb-[120px] text-[22px] font-extrabold text-[#a6a6a6] [-webkit-text-stroke:3px_white] [paint-order:stroke]">
          so0000.com
        </p>
        <ViewCube />
        <NavigationBar />
      </main>
      <StatusBar />
    </div>
  );
}
